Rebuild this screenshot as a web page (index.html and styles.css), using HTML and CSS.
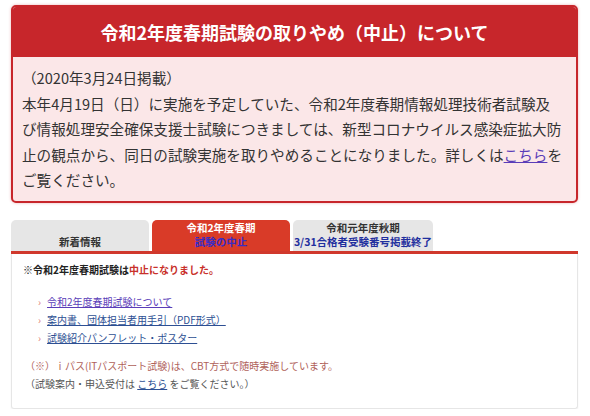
FILE: index.html
```html
<!DOCTYPE html>
<html lang="ja">
<head>
    <meta charset="UTF-8" />
    <title>情報処理技術者試験</title>
    <meta name="viewport" content="width=device-width, initial-scale=1" />
    <link rel="stylesheet" href="styles.css">
</head>
<body>
    <div class="notice-box">
        <h2 class="notice-title">令和2年度春期試験の取りやめ（中止）について</h2>
        <div class="notice-body">
            （2020年3月24日掲載）<br />
            本年4月19日（日）に実施を予定していた、令和2年度春期情報処理技術者試験及び情報処理安全確保支援士試験につきましては、新型コロナウイルス感染症拡大防止の観点から、同日の試験実施を取りやめることになりました。詳しくは<a href="#" class="visited">こちら</a>をご覧ください。
        </div>
    </div>

    <div class="tabs">
        <div class="tab">
            <span class="tab-line">&nbsp;</span>
            <span class="tab-line">新着情報</span>
        </div>
        <div class="tab active">
            <span class="tab-line">令和2年度春期</span>
            <span class="tab-line sub">試験の中止</span>
        </div>
        <div class="tab">
            <span class="tab-line">令和元年度秋期</span>
            <span class="tab-line sub">3/31合格者受験番号掲載終了</span>
        </div>
    </div>

    <div class="tab-panel">
        <p class="lead">※令和2年度春期試験は<span class="red">中止になりました。</span></p>

        <ul class="links">
            <li><a href="#" class="visited">令和2年度春期試験について</a></li>
            <li><a href="#">案内書、団体担当者用手引（PDF形式）</a></li>
            <li><a href="#">試験紹介パンフレット・ポスター</a></li>
        </ul>

        <p class="ipass">（※）ｉパス(ITパスポート試験)は、CBT方式で随時実施しています。<br />
            <span class="gray">（試験案内・申込受付は <a href="#">こちら</a> をご覧ください。）</span></p>
    </div>
</body>
</html>
```

FILE: styles.css
```css
body {
    margin: 0;
    padding: 5px 12px 0 11px;
    font-family: "Noto Sans CJK JP", "Noto Sans", sans-serif;
    color: #333;
    background: #fff;
}
a {
    color: #2d4f93;
}
a.visited {
    color: #5a3db8;
}

/* 中止のお知らせ */
.notice-box {
    width: 563px;
    border: 2px solid #c7262b;
    border-radius: 5px;
    background: #fbe7e8;
    box-shadow: 0 0 3px rgba(200, 40, 45, 0.35);
    overflow: hidden;
}
.notice-title {
    margin: 0;
    height: 50px;
    line-height: 50px;
    background: #c7262b;
    color: #fff;
    font-size: 18px;
    font-weight: bold;
    text-align: center;
}
.notice-body {
    padding: 8px 12px 8px 9px;
    font-size: 14.6px;
    line-height: 25.5px;
}

/* タブ */
.tabs {
    display: flex;
    gap: 3px;
    width: 567px;
    margin-top: 17px;
    border-bottom: 3px solid #d0382c;
}
.tab {
    display: flex;
    flex-direction: column;
    align-items: center;
    width: 138px;
    padding: 1px 0 2px;
    background: #e6e6e6;
    border-radius: 5px 5px 0 0;
    font-size: 10.5px;
    font-weight: bold;
    line-height: 14px;
    color: #333;
}
.tab:last-child {
    width: 140px;
}
.tab .sub {
    color: #1f2f9e;
}
.tab.active {
    background: #d93b28;
    color: #fff;
}
.tab.active .sub {
    color: #3a2cc4;
}

.tab-panel {
    width: 543px;
    padding: 9px 11px 15px;
    border: 1px solid #e6e6e6;
    border-top: none;
    border-radius: 0 0 3px 3px;
    box-shadow: 0 1px 2px rgba(0, 0, 0, 0.06);
    font-size: 10px;
}
.lead {
    margin: 0;
    line-height: 14px;
    font-weight: bold;
    color: #222;
}
.red {
    color: #c8302a;
}
.links {
    list-style: none;
    margin: 16px 0 0;
    padding: 0 0 0 15px;
    line-height: 18px;
}
.links li::before {
    content: "›";
    color: #e07a76;
    margin-right: 6px;
}
.ipass {
    margin: 10px 0 0 2px;
    line-height: 18px;
    color: #b0625a;
}
.ipass .gray {
    color: #555;
}
```
